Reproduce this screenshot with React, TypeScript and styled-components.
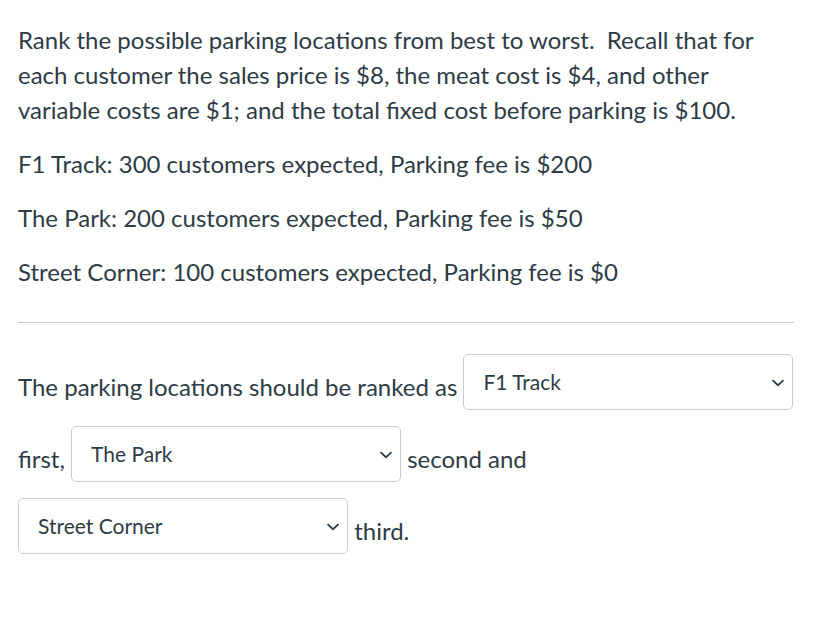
import React from 'react';
import styled, { createGlobalStyle } from 'styled-components';

const GlobalStyle = createGlobalStyle`
  body {
    margin: 0;
    background: #ffffff;
    font-family: Lato, "Open Sans", sans-serif;
    color: #2d3b45;
  }
`;

const Wrapper = styled.div`
  padding: 22px 18px 0 18px;
  width: 776px;
`;

const Para = styled.p`
  margin: 0 0 19px 0;
  font-size: 24px;
  line-height: 35px;
`;

const Rule = styled.hr`
  border: none;
  border-top: 1px solid #c7cdd1;
  margin: 33px 0 31px 0;
`;

const Sentence = styled.div`
  font-size: 24px;
  line-height: 35px;
`;

const SelectBox = styled.span<{ $width: number }>`
  display: inline-flex;
  align-items: center;
  justify-content: space-between;
  box-sizing: border-box;
  width: ${p => p.$width}px;
  height: 56px;
  padding: 0 7px 1px 19px;
  margin: 0 0 16px 0;
  border: 1px solid #c7cdd1;
  border-radius: 5px;
  vertical-align: 6px;
  font-size: 21px;
  line-height: 26px;
  color: #2d3b45;
  background: #fff;

  svg {
    margin-top: 2px;
  }
`;

const Chevron = () => (
  <svg width="14" height="8" viewBox="0 0 14 8">
    <path d="M1.5 1.2 L7 6.2 L12.5 1.2" fill="none" stroke="#2d3b45" strokeWidth="1.8" />
  </svg>
);

const Select = ({ value, width }: { value: string; width: number }) => (
  <SelectBox $width={width}>
    <span>{value}</span>
    <Chevron />
  </SelectBox>
);

export default function App() {
  return (
    <Wrapper>
      <GlobalStyle />
      <Para>
        Rank the possible parking locations from best to worst.&nbsp; Recall that for each customer the sales
        price is $8, the meat cost is $4, and other variable costs are $1; and the total fixed cost before
        parking is $100.
      </Para>
      <Para>F1 Track: 300 customers expected, Parking fee is $200</Para>
      <Para>The Park: 200 customers expected, Parking fee is $50</Para>
      <Para>Street Corner: 100 customers expected, Parking fee is $0</Para>
      <Rule />
      <Sentence>
        The parking locations should be ranked as <Select value="F1 Track" width={330} /> first,{' '}
        <Select value="The Park" width={330} /> second and <Select value="Street Corner" width={330} /> third.
      </Sentence>
    </Wrapper>
  );
}
